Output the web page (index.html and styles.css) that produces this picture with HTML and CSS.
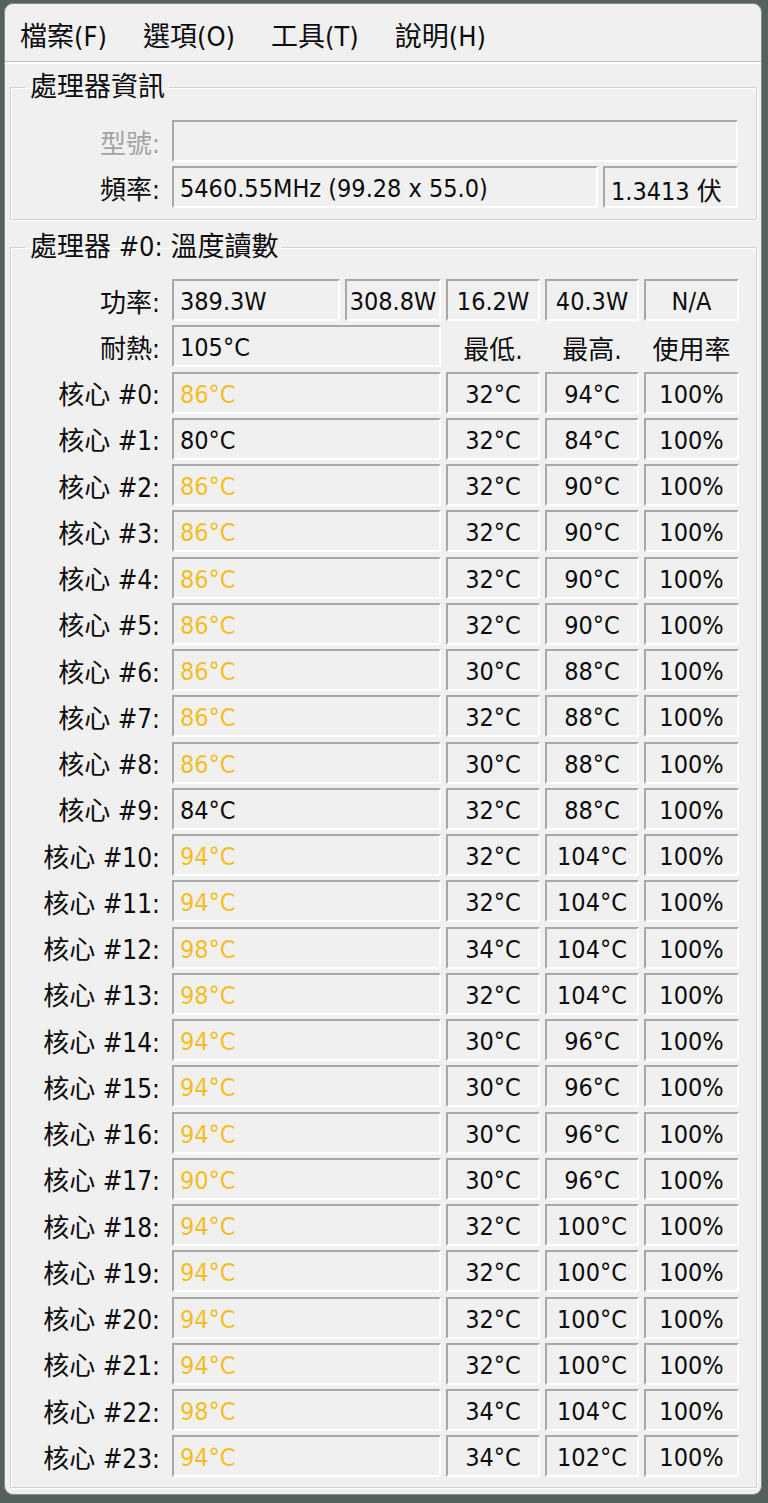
FILE: index.html
```html
<!DOCTYPE html>
<html lang="zh-Hant">
<head>
    <meta charset="UTF-8">
    <title>Core Temp</title>
    <link rel="stylesheet" href="styles.css">
</head>
<body>
    <div class="window">
        <div class="menubar">
            <span>檔案(F)</span>
            <span>選項(O)</span>
            <span>工具(T)</span>
            <span>說明(H)</span>
        </div>

        <fieldset class="group">
            <legend>處理器資訊</legend>
            <div class="info-grid">
                <div class="label disabled">型號:</div>
                <div class="box wide"></div>
                <div class="label">頻率:</div>
                <div class="box">5460.55MHz (99.28 x 55.0)</div>
                <div class="box">1.3413 伏</div>
            </div>
        </fieldset>

        <fieldset class="group">
            <legend>處理器 #0: 溫度讀數</legend>
            <div class="temp-grid">
                <div class="label">功率:</div>
                <div class="box">389.3W</div>
                <div class="box center">308.8W</div>
                <div class="box center">16.2W</div>
                <div class="box center">40.3W</div>
                <div class="box center">N/A</div>

                <div class="label">耐熱:</div>
                <div class="box span2">105°C</div>
                <div class="head">最低.</div>
                <div class="head">最高.</div>
                <div class="head">使用率</div>

                <div class="label">核心 #0:</div>
                <div class="box span2 hot">86°C</div>
                <div class="box center">32°C</div>
                <div class="box center">94°C</div>
                <div class="box center">100%</div>

                <div class="label">核心 #1:</div>
                <div class="box span2">80°C</div>
                <div class="box center">32°C</div>
                <div class="box center">84°C</div>
                <div class="box center">100%</div>

                <div class="label">核心 #2:</div>
                <div class="box span2 hot">86°C</div>
                <div class="box center">32°C</div>
                <div class="box center">90°C</div>
                <div class="box center">100%</div>

                <div class="label">核心 #3:</div>
                <div class="box span2 hot">86°C</div>
                <div class="box center">32°C</div>
                <div class="box center">90°C</div>
                <div class="box center">100%</div>

                <div class="label">核心 #4:</div>
                <div class="box span2 hot">86°C</div>
                <div class="box center">32°C</div>
                <div class="box center">90°C</div>
                <div class="box center">100%</div>

                <div class="label">核心 #5:</div>
                <div class="box span2 hot">86°C</div>
                <div class="box center">32°C</div>
                <div class="box center">90°C</div>
                <div class="box center">100%</div>

                <div class="label">核心 #6:</div>
                <div class="box span2 hot">86°C</div>
                <div class="box center">30°C</div>
                <div class="box center">88°C</div>
                <div class="box center">100%</div>

                <div class="label">核心 #7:</div>
                <div class="box span2 hot">86°C</div>
                <div class="box center">32°C</div>
                <div class="box center">88°C</div>
                <div class="box center">100%</div>

                <div class="label">核心 #8:</div>
                <div class="box span2 hot">86°C</div>
                <div class="box center">30°C</div>
                <div class="box center">88°C</div>
                <div class="box center">100%</div>

                <div class="label">核心 #9:</div>
                <div class="box span2">84°C</div>
                <div class="box center">32°C</div>
                <div class="box center">88°C</div>
                <div class="box center">100%</div>

                <div class="label">核心 #10:</div>
                <div class="box span2 hot">94°C</div>
                <div class="box center">32°C</div>
                <div class="box center">104°C</div>
                <div class="box center">100%</div>

                <div class="label">核心 #11:</div>
                <div class="box span2 hot">94°C</div>
                <div class="box center">32°C</div>
                <div class="box center">104°C</div>
                <div class="box center">100%</div>

                <div class="label">核心 #12:</div>
                <div class="box span2 hot">98°C</div>
                <div class="box center">34°C</div>
                <div class="box center">104°C</div>
                <div class="box center">100%</div>

                <div class="label">核心 #13:</div>
                <div class="box span2 hot">98°C</div>
                <div class="box center">32°C</div>
                <div class="box center">104°C</div>
                <div class="box center">100%</div>

                <div class="label">核心 #14:</div>
                <div class="box span2 hot">94°C</div>
                <div class="box center">30°C</div>
                <div class="box center">96°C</div>
                <div class="box center">100%</div>

                <div class="label">核心 #15:</div>
                <div class="box span2 hot">94°C</div>
                <div class="box center">30°C</div>
                <div class="box center">96°C</div>
                <div class="box center">100%</div>

                <div class="label">核心 #16:</div>
                <div class="box span2 hot">94°C</div>
                <div class="box center">30°C</div>
                <div class="box center">96°C</div>
                <div class="box center">100%</div>

                <div class="label">核心 #17:</div>
                <div class="box span2 hot">90°C</div>
                <div class="box center">30°C</div>
                <div class="box center">96°C</div>
                <div class="box center">100%</div>

                <div class="label">核心 #18:</div>
                <div class="box span2 hot">94°C</div>
                <div class="box center">32°C</div>
                <div class="box center">100°C</div>
                <div class="box center">100%</div>

                <div class="label">核心 #19:</div>
                <div class="box span2 hot">94°C</div>
                <div class="box center">32°C</div>
                <div class="box center">100°C</div>
                <div class="box center">100%</div>

                <div class="label">核心 #20:</div>
                <div class="box span2 hot">94°C</div>
                <div class="box center">32°C</div>
                <div class="box center">100°C</div>
                <div class="box center">100%</div>

                <div class="label">核心 #21:</div>
                <div class="box span2 hot">94°C</div>
                <div class="box center">32°C</div>
                <div class="box center">100°C</div>
                <div class="box center">100%</div>

                <div class="label">核心 #22:</div>
                <div class="box span2 hot">98°C</div>
                <div class="box center">34°C</div>
                <div class="box center">104°C</div>
                <div class="box center">100%</div>

                <div class="label">核心 #23:</div>
                <div class="box span2 hot">94°C</div>
                <div class="box center">34°C</div>
                <div class="box center">102°C</div>
                <div class="box center">100%</div>
            </div>
        </fieldset>
    </div>
</body>
</html>
```

FILE: styles.css
```css
body {
    margin: 0;
    background-color: #55615e;
    font-family: "DejaVu Sans Condensed", "Liberation Sans", "Noto Sans CJK TC", sans-serif;
    font-size: 25px;
    color: #0c0c0c;
}

/* finestra principale */
.window {
    margin: 3px 0 0 4px;
    width: 758px;
    height: 1492px;
    box-sizing: border-box;
    border: 1px solid #8a8a8a;
    border-radius: 9px;
    background-color: #f0f0f0;
    overflow: hidden;
}

.menubar {
    display: flex;
    align-items: center;
    gap: 36px;
    height: 58px;
    padding: 4px 0 0 15px;
    box-sizing: border-box;
    border-bottom: 1px solid #bdbdbd;
    box-shadow: 0 2px 0 #fff;
    font-size: 27px;
}

.group {
    margin: 11px 4px 0 5px;
    padding: 19px 0 11px 0;
    border: 1px solid #d2d2d2;
    box-shadow: inset 1px 1px 0 #fff, 1px 1px 0 #fff;
    min-width: 0;
}
.group + .group {
    margin-top: 13px;
    padding-top: 18px;
    padding-bottom: 10px;
}
.group legend {
    margin-left: 15px;
    padding: 0 4px;
    font-size: 27px;
    line-height: 28px;
}

.info-grid {
    display: grid;
    grid-template-columns: 156px 426px 135px;
    grid-auto-rows: 42px;
    column-gap: 5px;
    row-gap: 4px;
}
.temp-grid {
    display: grid;
    grid-template-columns: 156px 168px 96px 94px 94px 95px;
    grid-auto-rows: 42px;
    column-gap: 5px;
    row-gap: 4.25px;
}

.label {
    display: flex;
    align-items: center;
    justify-content: flex-end;
    padding-right: 7px;
    font-size: 26px;
    white-space: nowrap;
}
.disabled {
    color: #a3a3a3;
}

.box {
    display: flex;
    align-items: center;
    padding: 3px 6px 0;
    border: 2px solid;
    border-color: #a8a8a8 #fff #fff #a8a8a8;
    white-space: nowrap;
    overflow: hidden;
}
.center {
    justify-content: center;
    padding: 3px 0 0;
}
.wide,
.span2 {
    grid-column: span 2;
}
.hot {
    color: #f3be24;
}

.head {
    display: flex;
    align-items: center;
    justify-content: center;
    padding-top: 2px;
    font-size: 26px;
}
```
